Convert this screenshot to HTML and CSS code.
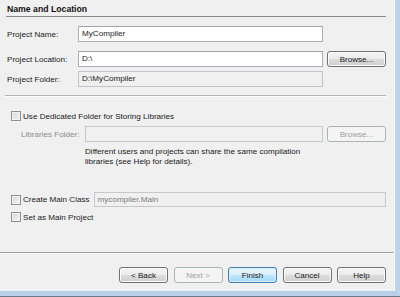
FILE: index.html
```html
<!DOCTYPE html>
<html lang="en">
<head>
    <meta charset="UTF-8">
    <title>New Project - Name and Location</title>
    <link rel="stylesheet" href="styles.css">
</head>
<body>
    <div class="frame">
        <div class="window">
            <div class="panel">
                <div class="content">
                    <div class="section-title">Name and Location</div>

                    <div class="row row-name">
                        <span class="label">Project Name:</span>
                        <div class="input">MyCompiler</div>
                    </div>
                    <div class="row row-location">
                        <span class="label">Project Location:</span>
                        <div class="input">D:\</div>
                        <button class="btn btn-browse">Browse...</button>
                    </div>
                    <div class="row row-folder">
                        <span class="label">Project Folder:</span>
                        <div class="input input-readonly">D:\MyCompiler</div>
                    </div>

                    <div class="separator"></div>

                    <div class="check-row check-libraries">
                        <span class="checkbox"></span>
                        <span class="check-label">Use Dedicated Folder for Storing Libraries</span>
                    </div>
                    <div class="row row-libraries">
                        <span class="label label-disabled">Libraries Folder:</span>
                        <div class="input input-disabled"></div>
                        <button class="btn btn-browse" disabled>Browse...</button>
                    </div>
                    <p class="hint">Different users and projects can share the same compilation<br>libraries (see Help for details).</p>

                    <div class="check-row check-main-class">
                        <span class="checkbox"></span>
                        <span class="check-label">Create Main Class</span>
                        <div class="input input-main">mycompiler.Main</div>
                    </div>
                    <div class="check-row check-main-project">
                        <span class="checkbox"></span>
                        <span class="check-label">Set as Main Project</span>
                    </div>
                </div>

                <div class="footer">
                    <button class="btn">&lt; Back</button>
                    <button class="btn" disabled>Next &gt;</button>
                    <button class="btn btn-default">Finish</button>
                    <button class="btn">Cancel</button>
                    <button class="btn">Help</button>
                </div>
            </div>
        </div>
    </div>
</body>
</html>
```

FILE: styles.css
```css
body {
    margin: 0;
    padding: 0;
    background-color: #f0f0f0;
    font-family: "Liberation Sans", Arial, sans-serif;
    font-size: 8.1px;
    color: #1a1a1a;
}

.frame {
    width: 400px;
    height: 297px;
    border-bottom: 1px solid #6b7a89;
    box-sizing: border-box;
}

.window {
    width: 400px;
    height: 296px;
    box-sizing: border-box;
    border-right: 5px solid #bcd4ec;
    border-bottom: 5px solid #b8d0ea;
}

.panel {
    width: 395px;
    height: 291px;
    box-sizing: border-box;
    background-color: #f0f0f0;
    border-right: 1px solid #fbfbfb;
    display: flex;
    flex-direction: column;
}

.content {
    flex: 1;
    padding: 0 8px 0 7px;
}

.section-title {
    font-weight: bold;
    font-size: 8.7px;
    line-height: 13px;
    padding-top: 3px;
    margin-left: -1px;
    padding-left: 1px;
    border-bottom: 1px solid #8a8a8a;
    color: #101010;
}

/* form rows */
.row {
    display: flex;
    align-items: center;
    height: 16px;
}

.row-name {
    margin-top: 9px;
}

.row-location {
    margin-top: 9px;
}

.row-folder {
    margin-top: 4px;
}

.label {
    width: 71px;
    flex-shrink: 0;
}

.label-disabled {
    color: #8c8c8c;
    width: 64px;
    margin-left: 14px;
}

.input {
    width: 245px;
    height: 16px;
    box-sizing: border-box;
    border: 1px solid #abadb3;
    border-top-color: #a2a4a8;
    background-color: #ffffff;
    padding-left: 3px;
    line-height: 14px;
    white-space: nowrap;
    overflow: hidden;
}

.input-readonly {
    background-color: #f0f0f0;
    border-color: #c2c4c8;
}

.input-disabled {
    background-color: #f0f0f0;
    border-color: #c6c8cc;
    width: 238px;
}

.input-main {
    flex: 1;
    width: auto;
    height: 15px;
    line-height: 13px;
    margin-left: 4px;
    background-color: #f0f0f0;
    border-color: #c6c8cc;
    color: #7a7a7a;
}

.separator {
    margin-top: 8px;
    margin-left: -2px;
    border-top: 1px solid #b4b4b4;
    border-bottom: 1px solid #ffffff;
}

/* checkboxes */
.check-row {
    display: flex;
    align-items: center;
    padding-left: 4px;
}

.checkbox {
    width: 10px;
    height: 10px;
    box-sizing: border-box;
    border: 1px solid #8e8f8f;
    background: linear-gradient(135deg, #d6d6d6, #f6f6f6);
    box-shadow: inset 0 0 0 1px #f2f2f2;
    flex-shrink: 0;
}

.check-label {
    margin-left: 2px;
}

.check-libraries {
    margin-top: 14px;
    height: 10px;
}

.row-libraries {
    margin-top: 5px;
}

.hint {
    margin: 5px 0 0 78px;
    line-height: 10px;
}

.check-main-class {
    margin-top: 25px;
    height: 15px;
}

.check-main-project {
    margin-top: 5px;
    height: 10px;
}

/* buttons */
.btn {
    font-family: "Liberation Sans", Arial, sans-serif;
    font-size: 8.1px;
    color: #1a1a1a;
    width: 49px;
    height: 16px;
    padding: 0;
    border: 1px solid #707070;
    border-radius: 3px;
    background: linear-gradient(#f3f3f3 0%, #ebebeb 50%, #dddddd 51%, #cfcfcf 100%);
    box-shadow: inset 0 0 0 1px #fcfcfc;
    flex-shrink: 0;
}

.btn:disabled {
    color: #a0a0a0;
    border-color: #adb2b5;
    background: #f4f4f4;
    box-shadow: none;
}

.btn-browse {
    width: 59px;
    margin-left: 4px;
}

.btn-default {
    border-color: #3c7fb1;
    background: linear-gradient(#eaf6fd 0%, #d9f0fc 50%, #bee6fd 51%, #a7d9f5 100%);
    box-shadow: inset 0 0 0 1px #dcefff;
}

.footer {
    height: 39px;
    box-sizing: border-box;
    border-top: 1px solid #a0a0a0;
    box-shadow: inset 0 1px 0 #ffffff;
    display: flex;
    justify-content: flex-end;
    align-items: flex-start;
    gap: 5.5px;
    padding: 14px 8px 0 0;
}
```
